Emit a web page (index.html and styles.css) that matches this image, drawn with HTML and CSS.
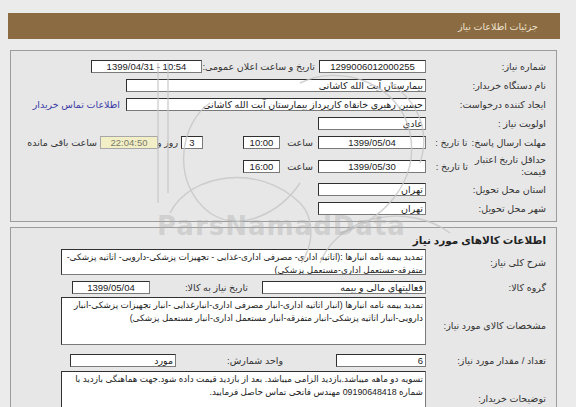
FILE: index.html
```html
<!DOCTYPE html>
<html lang="fa">
<head>
<meta charset="utf-8">
<title>جزئیات اطلاعات نیاز</title>
<link rel="stylesheet" href="styles.css">
</head>
<body>
<div class="page">
  <div class="hdr"><span>جزئیات اطلاعات نیاز</span></div>

  <div class="panel p1">
    <div class="row">
      <div class="lbl">شماره نیاز:</div>
      <div class="box w107 c">1299006012000255</div>
      <div class="txt t108 mr4">تاریخ و ساعت اعلان عمومی:</div>
      <div class="box w111 c mr5 ltr">1399/04/31 - 10:54</div>
    </div>
    <div class="row">
      <div class="lbl">نام دستگاه خریدار:</div>
      <div class="box w300">بیمارستان آیت الله کاشانی</div>
    </div>
    <div class="row">
      <div class="lbl">ایجاد کننده درخواست:</div>
      <div class="box w300">حسین رهبری خانقاه کارپرداز بیمارستان آیت الله کاشانی</div>
      <a class="link" href="#">اطلاعات تماس خریدار</a>
    </div>
    <div class="row">
      <div class="lbl">اولویت نیاز :</div>
      <div class="box w108">عادی</div>
    </div>
    <div class="row">
      <div class="lbl split"><span class="main nw">مهلت ارسال پاسخ:</span><span class="sub s5">تا تاریخ :</span></div>
      <div class="box w108 c">1399/05/04</div>
      <div class="txt t22 mr5">ساعت</div>
      <div class="box w37 c mr11">10:00</div>
      <div class="box w22 c mr40">3</div>
      <div class="txt t16 mr3">روز و</div>
      <div class="box w58 c mr4 remain">22:04:50</div>
      <div class="txt t70 mr3">ساعت باقی مانده</div>
    </div>
    <div class="row tall">
      <div class="lbl split"><span class="main wrap">حداقل تاریخ اعتبار<br>قیمت:</span><span class="sub s6">تا تاریخ :</span></div>
      <div class="box w108 c">1399/05/30</div>
      <div class="txt t22 mr5">ساعت</div>
      <div class="box w37 c mr11">16:00</div>
    </div>
    <div class="row">
      <div class="lbl">استان محل تحویل:</div>
      <div class="box w108">تهران</div>
    </div>
    <div class="row">
      <div class="lbl">شهر محل تحویل:</div>
      <div class="box w108">تهران</div>
    </div>
  </div>

  <div class="panel p2">
    <div class="title">اطلاعات کالاهای مورد نیاز</div>
    <div class="row ta-row">
      <div class="lbl">شرح کلی نیاز:</div>
      <div class="area h26">تمدید بیمه نامه انبارها :(اثاثیه اداری- مصرفی اداری-غذایی - تجهیزات پزشکی-دارویی- اثاثیه پزشکی-<br>متفرقه-مستعمل اداری-مستعمل پزشکی)</div>
    </div>
    <div class="row r16">
      <div class="lbl">گروه کالا:</div>
      <div class="box w164">فعالیتهای مالی و بیمه</div>
      <div class="txt t73 mr14">تاریخ نیاز به کالا:</div>
      <div class="box w78 c mr25">1399/05/04</div>
    </div>
    <div class="row ta-row mt2">
      <div class="lbl pt8">مشخصات کالای مورد نیاز:</div>
      <div class="area h48">تمدید بیمه نامه انبارها (انبار اثاثیه اداری-انبار مصرفی اداری-انبارغذایی -انبار تجهیزات پزشکی-انبار<br>دارویی-انبار اثاثیه پزشکی-انبار متفرقه-انبار مستعمل اداری-انبار مستعمل پزشکی)</div>
    </div>
    <div class="row r18 mt6">
      <div class="lbl">تعداد / مقدار مورد نیاز:</div>
      <div class="box w90">6</div>
      <div class="txt t43 mr53">واحد شمارش:</div>
      <div class="box w106 mr64">مورد</div>
    </div>
    <div class="row ta-row mt2">
      <div class="lbl pt6">توضیحات خریدار:</div>
      <div class="area h48">تسویه دو ماهه میباشد.بازدید الزامی میباشد. بعد از بازدید قیمت داده شود.جهت هماهنگی بازدید با<br>شماره 09190648418 مهندس فاتحی تماس حاصل فرمایید.</div>
    </div>
  </div>

  <div class="wm" aria-hidden="true">
    <svg class="wm-logo" width="340" height="200" viewBox="0 0 340 200">
      <g fill="none" stroke="#c6c6c6" stroke-width="1.4">
        <line x1="8" y1="0" x2="8" y2="140"/>
        <line x1="18" y1="0" x2="18" y2="130"/>
        <path d="M60 40 C 30 60, 20 120, 60 150 C 90 170, 130 150, 150 120"/>
        <path d="M150 20 C 190 0, 250 20, 260 70 C 270 120, 230 160, 190 170"/>
        <path d="M20 150 C 40 110, 110 100, 150 140 C 170 160, 160 200, 140 210"/>
        <path d="M170 200 C 190 150, 260 140, 300 170"/>
        <path d="M240 20 C 270 40, 280 70, 270 100"/>
      </g>
    </svg>
    <div class="wm-text">ParsNamadData</div>
  </div>
</div>
</body>
</html>
```
FILE: styles.css
```css
html, body {
  margin: 0;
  padding: 0;
}
body {
  background: #ebebeb;
  font-family: "Liberation Sans", "DejaVu Sans", sans-serif;
  font-size: 9.5px;
  color: #222;
}
.page {
  position: relative;
  width: 552px;
  margin: 13px 0 0 8px;
  direction: rtl;
}
.hdr {
  height: 26px;
  background: #8b6b41;
  color: #eee3d0;
  display: flex;
  align-items: center;
  padding-right: 22px;
  font-size: 9.5px;
}
.panel {
  border: 1px solid #9c9c9c;
  margin: 0 3px 0 2px;
  background: #e7e7e7;
  padding-right: 10px;
}
.p1 {
  margin-top: 11px;
  padding-top: 6px;
  padding-bottom: 3px;
}
.p2 {
  margin-top: 5px;
  padding-top: 5px;
  padding-bottom: 4px;
  height: 178px;
  overflow: hidden;
}
.row {
  display: flex;
  align-items: center;
  height: 19px;
}
.row.tall { height: 28px; }
.row.r16 { height: 16px; margin-top: 4px; }
.row.r18 { height: 18px; }
.row.ta-row { height: auto; align-items: stretch; }
.ta-row .lbl { display: flex; align-items: center; }
.mt2 { margin-top: 2px; }
.mt6 { margin-top: 6px; }
.lbl {
  width: 120px;
  flex: none;
  color: #333;
}
.lbl.split {
  display: flex;
  align-items: center;
}
.lbl .main { line-height: 12px; }
.lbl .main.nw { white-space: nowrap; }
.lbl .main.wrap { width: 68px; white-space: nowrap; }
.lbl .sub { white-space: nowrap; }
.lbl .sub.s5 { margin-right: 4px; }
.lbl .sub.s6 { margin-right: 10px; }
.pt8 { padding-top: 8px; }
.pt6 { padding-top: 6px; }
.box {
  flex: none;
  height: 13px;
  box-sizing: border-box;
  background: #fff;
  border: 1px solid #7a7a7a;
  border-top-color: #303030;
  border-left-color: #303030;
  line-height: 11px;
  padding: 0 2px;
  white-space: nowrap;
  overflow: hidden;
  color: #222;
}
.box.c { text-align: center; }
.box.ltr { direction: ltr; }
.remain {
  background: #f2efc6;
  color: #7a7a66;
  border-color: #a8a8a8;
}
.area {
  width: 365px;
  flex: none;
  box-sizing: border-box;
  background: #fff;
  border: 1px solid #7a7a7a;
  border-top-color: #303030;
  border-left-color: #303030;
  padding: 1px 2px;
  line-height: 13px;
  font-size: 8.8px;
  white-space: nowrap;
  overflow: hidden;
}
.h26 { height: 26px; }
.h48 { height: 48px; }
.txt { flex: none; color: #333; white-space: nowrap; }
.t16 { width: 16px; }
.t22 { width: 22px; }
.t43 { width: 43px; }
.t70 { width: 70px; }
.t73 { width: 73px; }
.t108 { width: 108px; }
.link {
  color: #3b3ba6;
  text-decoration: none;
  margin-right: 6px;
  white-space: nowrap;
}
.title {
  font-weight: bold;
  font-size: 10.5px;
  line-height: 14px;
  color: #222;
  margin-bottom: 2px;
}
.w22 { width: 22px; }
.w37 { width: 37px; }
.w58 { width: 58px; }
.w78 { width: 78px; }
.w90 { width: 90px; }
.w106 { width: 106px; }
.w107 { width: 107px; }
.w108 { width: 108px; }
.w111 { width: 111px; }
.w164 { width: 164px; }
.w300 { width: 300px; }
.mr3 { margin-right: 3px; }
.mr4 { margin-right: 4px; }
.mr5 { margin-right: 5px; }
.mr11 { margin-right: 11px; }
.mr14 { margin-right: 14px; }
.mr25 { margin-right: 25px; }
.mr40 { margin-right: 40px; }
.mr53 { margin-right: 53px; }
.mr64 { margin-right: 64px; }

.wm {
  position: absolute;
  inset: 0;
  pointer-events: none;
  direction: ltr;
}
.wm-logo {
  position: absolute;
  left: 142px;
  top: 50px;
  opacity: 0.8;
}
.wm-text {
  position: absolute;
  left: 149px;
  top: 198px;
  font-family: "DejaVu Sans", sans-serif;
  font-weight: bold;
  font-size: 26px;
  letter-spacing: 1px;
  color: rgba(170, 170, 170, 0.4);
}
```
